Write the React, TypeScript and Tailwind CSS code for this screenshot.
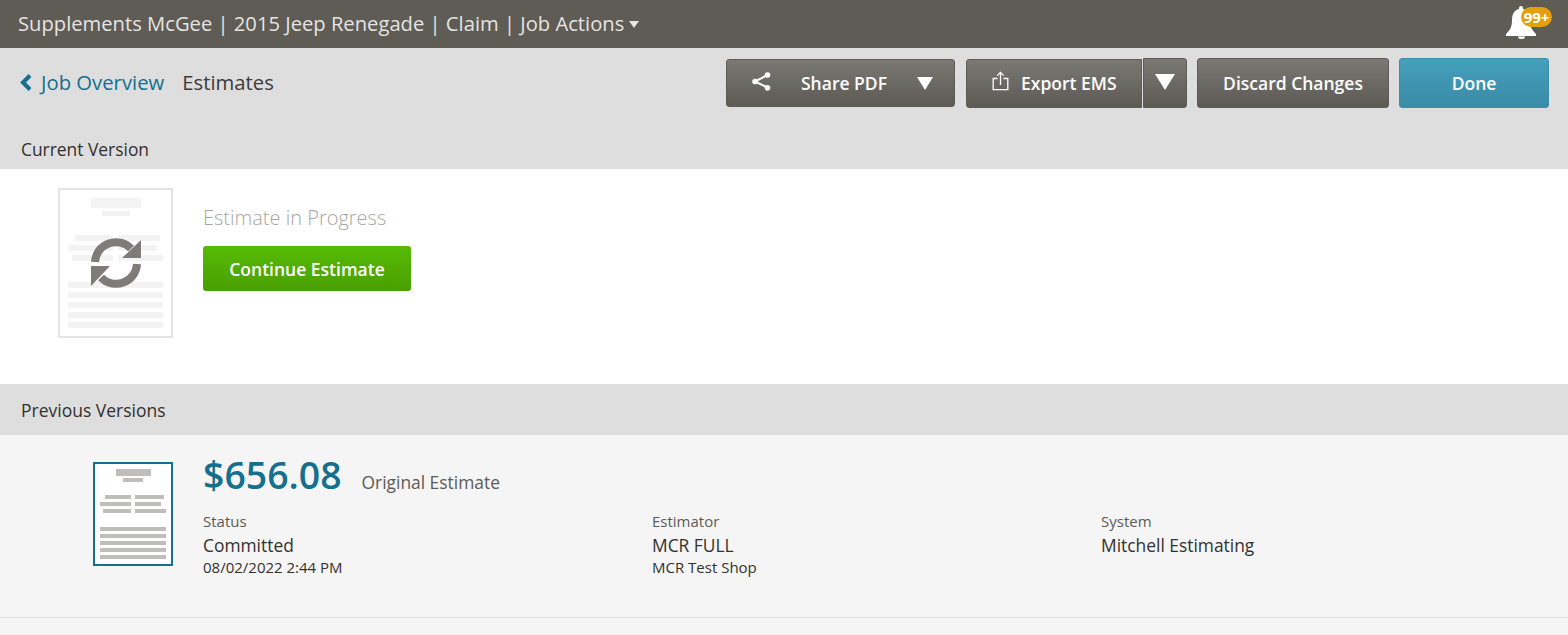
const grayButton =
  "flex items-center rounded-[3px] border border-[#5f5c57] bg-gradient-to-b from-[#7b7974] to-[#5d5a55] text-[17.5px] font-semibold text-white";

const Caret = ({ w, h }: { w: number; h: number }) => (
  <svg width={w} height={h} viewBox="0 0 16 14" preserveAspectRatio="none">
    <path d="M0 0H16L8 14Z" fill="#fff" />
  </svg>
);

const BackChevron = () => (
  <svg width="13" height="17" viewBox="0 0 13 17" fill="none" stroke="#14708e" strokeWidth="4">
    <path d="M11 1.5 4 8.5l7 7" />
  </svg>
);

const ShareIcon = () => (
  <svg width="19" height="19" viewBox="0 0 19 19" fill="#fff" stroke="#fff">
    <path d="M15.5 3 3 9.5l12.5 6" fill="none" strokeWidth="2" />
    <circle cx="15.5" cy="3" r="2.6" strokeWidth="0.5" />
    <circle cx="3" cy="9.5" r="2.6" strokeWidth="0.5" />
    <circle cx="15.5" cy="15.8" r="2.6" strokeWidth="0.5" />
  </svg>
);

const ExportIcon = () => (
  <svg width="17" height="20" viewBox="0 0 17 20" fill="none" stroke="#fff" strokeWidth="1.3">
    <path d="M5.5 7.5H1.2V18.6H15.8V7.5H11.5" />
    <path d="M8.5 14V1.5M5.2 4.6 8.5 1.3l3.3 3.3" />
  </svg>
);

const SyncIcon = () => (
  <svg width="52" height="52" viewBox="0 0 52 52" className="absolute left-[30px] top-[47px]">
    <path d="M5 25A21 21 0 0 1 41 11.500" fill="none" stroke="#7d7c78" strokeWidth="8" />
    <path d="M51 3V21H32Z" fill="#7d7c78" />
    <path d="M47 27A21 21 0 0 1 11 40.500" fill="none" stroke="#7d7c78" strokeWidth="8" />
    <path d="M1 49V29H20Z" fill="#7d7c78" />
  </svg>
);

const BellIcon = () => (
  <svg width="30" height="33" viewBox="0 0 30 33" className="absolute left-[2px] top-[6px]">
    <path
      d="M13 2a2 2 0 0 1 4 0v1c5 1 7 6 7 11 0 7 2 10 6 14v2H0v-2c4-4 6-7 6-14C6 9 8 4 13 3Z M12 30.500h7c0 3.500-7 3.500-7 0Z"
      fill="#fff"
    />
  </svg>
);

const PlaceholderDoc = () => (
  <div className="flex w-full flex-col items-center">
    <div className="h-[10px] w-[50px] bg-[#f3f3f3]" />
    <div className="mt-[3px] h-[5px] w-[28px] bg-[#f3f3f3]" />
    <div className="mt-[19px] grid w-[95px] grid-cols-2 gap-x-[5px] gap-y-[4px]">
      <div className="ml-auto h-[6px] w-[38px] bg-[#f3f3f3]" />
      <div className="h-[6px] w-[42px] bg-[#f3f3f3]" />
      <div className="ml-auto h-[6px] w-[45px] bg-[#f3f3f3]" />
      <div className="h-[6px] w-[39px] bg-[#f3f3f3]" />
      <div className="ml-auto h-[6px] w-[41px] bg-[#f3f3f3]" />
      <div className="h-[6px] w-[45px] bg-[#f3f3f3]" />
    </div>
    <div className="mt-[21px] flex w-[95px] flex-col gap-[4px]">
      <div className="h-[6px] bg-[#f3f3f3]" />
      <div className="h-[6px] bg-[#f3f3f3]" />
      <div className="h-[6px] bg-[#f3f3f3]" />
      <div className="h-[6px] bg-[#f3f3f3]" />
      <div className="h-[6px] bg-[#f3f3f3]" />
    </div>
  </div>
);

const CommittedDoc = () => (
  <div className="flex w-full flex-col items-center">
    <div className="h-[7px] w-[35px] bg-[#bfbebc]" />
    <div className="mt-[2px] h-[4px] w-[20px] bg-[#bfbebc]" />
    <div className="mt-[13px] grid w-[66px] grid-cols-2 gap-x-[4px] gap-y-[3px]">
      <div className="ml-auto h-[4px] w-[26px] bg-[#bfbebc]" />
      <div className="h-[4px] w-[29px] bg-[#bfbebc]" />
      <div className="ml-auto h-[4px] w-[31px] bg-[#bfbebc]" />
      <div className="h-[4px] w-[26px] bg-[#bfbebc]" />
      <div className="ml-auto h-[4px] w-[28px] bg-[#bfbebc]" />
      <div className="h-[4px] w-[31px] bg-[#bfbebc]" />
    </div>
    <div className="mt-[14px] flex w-[66px] flex-col gap-[3px]">
      <div className="h-[4px] bg-[#bfbebc]" />
      <div className="h-[4px] bg-[#bfbebc]" />
      <div className="h-[4px] bg-[#bfbebc]" />
      <div className="h-[4px] bg-[#bfbebc]" />
      <div className="h-[4px] bg-[#bfbebc]" />
    </div>
  </div>
);

const details = [
  { label: "Status", value: "Committed", sub: "08/02/2022 2:44 PM" },
  { label: "Estimator", value: "MCR FULL", sub: "MCR Test Shop" },
  { label: "System", value: "Mitchell Estimating", sub: "" },
];

export default function App() {
  return (
    <div className="h-[635px] overflow-hidden bg-[#f5f5f5] font-['Open_Sans',sans-serif] text-[#33312e]">
      <header className="flex h-[48px] items-center justify-between bg-[#5f5b55] pl-[18px] pr-[16px]">
        <div className="-mt-[2px] flex items-center text-[20.2px] text-[#e4e4e2]">
          <span>Supplements McGee | 2015 Jeep Renegade | Claim | Job Actions</span>
          <span className="ml-[5px] mt-[3px] h-0 w-0 border-x-[5px] border-t-[7px] border-x-transparent border-t-[#e4e4e2]" />
        </div>
        <div className="relative h-[48px] w-[48px]">
          <BellIcon />
          <span className="absolute left-[17px] top-[7px] flex h-[20px] w-[31px] items-center justify-center rounded-[10px] bg-[#e3a008] text-[15px] font-bold text-white">
            99+
          </span>
        </div>
      </header>

      <div className="flex h-[80px] items-start justify-between bg-[#dedede] pl-[19px] pr-[19px] pt-[10px]">
        <div className="flex h-[48px] items-center text-[20.3px]">
          <BackChevron />
          <span className="ml-[9px] text-[#14708e]">Job Overview</span>
          <span className="ml-[18px] text-[#3d3a3a]">Estimates</span>
        </div>
        <div className="flex items-start">
          <button className={`${grayButton} mt-px h-[48px] w-[229px] pl-[25px] pr-[21px]`}>
            <span className="-mt-[4px]">
              <ShareIcon />
            </span>
            <span className="ml-[30px] flex-1 text-left">Share PDF</span>
            <Caret w={16} h={13} />
          </button>
          <button className={`${grayButton} ml-[11px] mt-px h-[49px] w-[176px] gap-[12px] rounded-r-none pl-[25px]`}>
            <span className="-mt-[5px]">
              <ExportIcon />
            </span>
            Export EMS
          </button>
          <button className={`${grayButton} ml-px h-[50px] w-[44px] justify-center rounded-l-none`}>
            <span className="-mt-[3px]">
              <Caret w={20} h={16} />
            </span>
          </button>
          <button className={`${grayButton} ml-[10px] h-[50px] w-[192px] justify-center pt-px`}>Discard Changes</button>
          <button className="ml-[10px] flex h-[50px] w-[150px] items-center justify-center rounded-[3px] border border-[#3d8fa9] bg-gradient-to-b from-[#44a0bc] to-[#3a8ba6] pt-px text-[17.5px] font-semibold text-white">
            Done
          </button>
        </div>
      </div>

      <div className="flex h-[41px] items-center bg-[#dedede] pl-[21px] pt-[2px] text-[17.4px]">Current Version</div>

      <section className="flex h-[215px] bg-white pl-[58px] pt-[19px]">
        <div className="relative flex h-[150px] w-[115px] border-2 border-[#e3e3e3] px-[8px] pt-[8px]">
          <PlaceholderDoc />
          <SyncIcon />
        </div>
        <div className="ml-[30px] pt-[16px]">
          <p className="text-[20px] font-light leading-[27px] text-[#a8a6a3]">Estimate in Progress</p>
          <button className="mt-[15px] flex h-[45px] w-[208px] items-center justify-center rounded-[3px] bg-gradient-to-b from-[#56bb04] to-[#4a9f02] pt-px text-[17.5px] font-semibold text-white">
            Continue Estimate
          </button>
        </div>
      </section>

      <div className="flex h-[51px] items-center bg-[#dedede] pl-[21px] pt-[1px] text-[17.5px]">Previous Versions</div>

      <section className="flex h-[183px] border-b border-[#dcdcdc] bg-[#f5f5f5] pl-[93px] pt-[27px]">
        <div className="flex h-[104px] w-[80px] border-2 border-[#14708e] bg-white px-[5px] pt-[5px]">
          <CommittedDoc />
        </div>
        <div className="ml-[30px]">
          <div className="flex items-baseline">
            <span className="text-[37.4px] font-semibold leading-[26px] text-[#14708e]">$656.08</span>
            <span className="ml-[20px] text-[17.4px] text-[#5d5a55]">Original Estimate</span>
          </div>
          <div className="mt-[17px] grid w-[1347px] grid-cols-3">
            {details.map((d) => (
              <div key={d.label}>
                <div className="text-[15px] leading-[19px] text-[#5d5a55]">{d.label}</div>
                <div className="mt-[2px] text-[17.4px] leading-[25px]">{d.value}</div>
                <div className="text-[15px] leading-[19px]">{d.sub}</div>
              </div>
            ))}
          </div>
        </div>
      </section>
    </div>
  );
}
